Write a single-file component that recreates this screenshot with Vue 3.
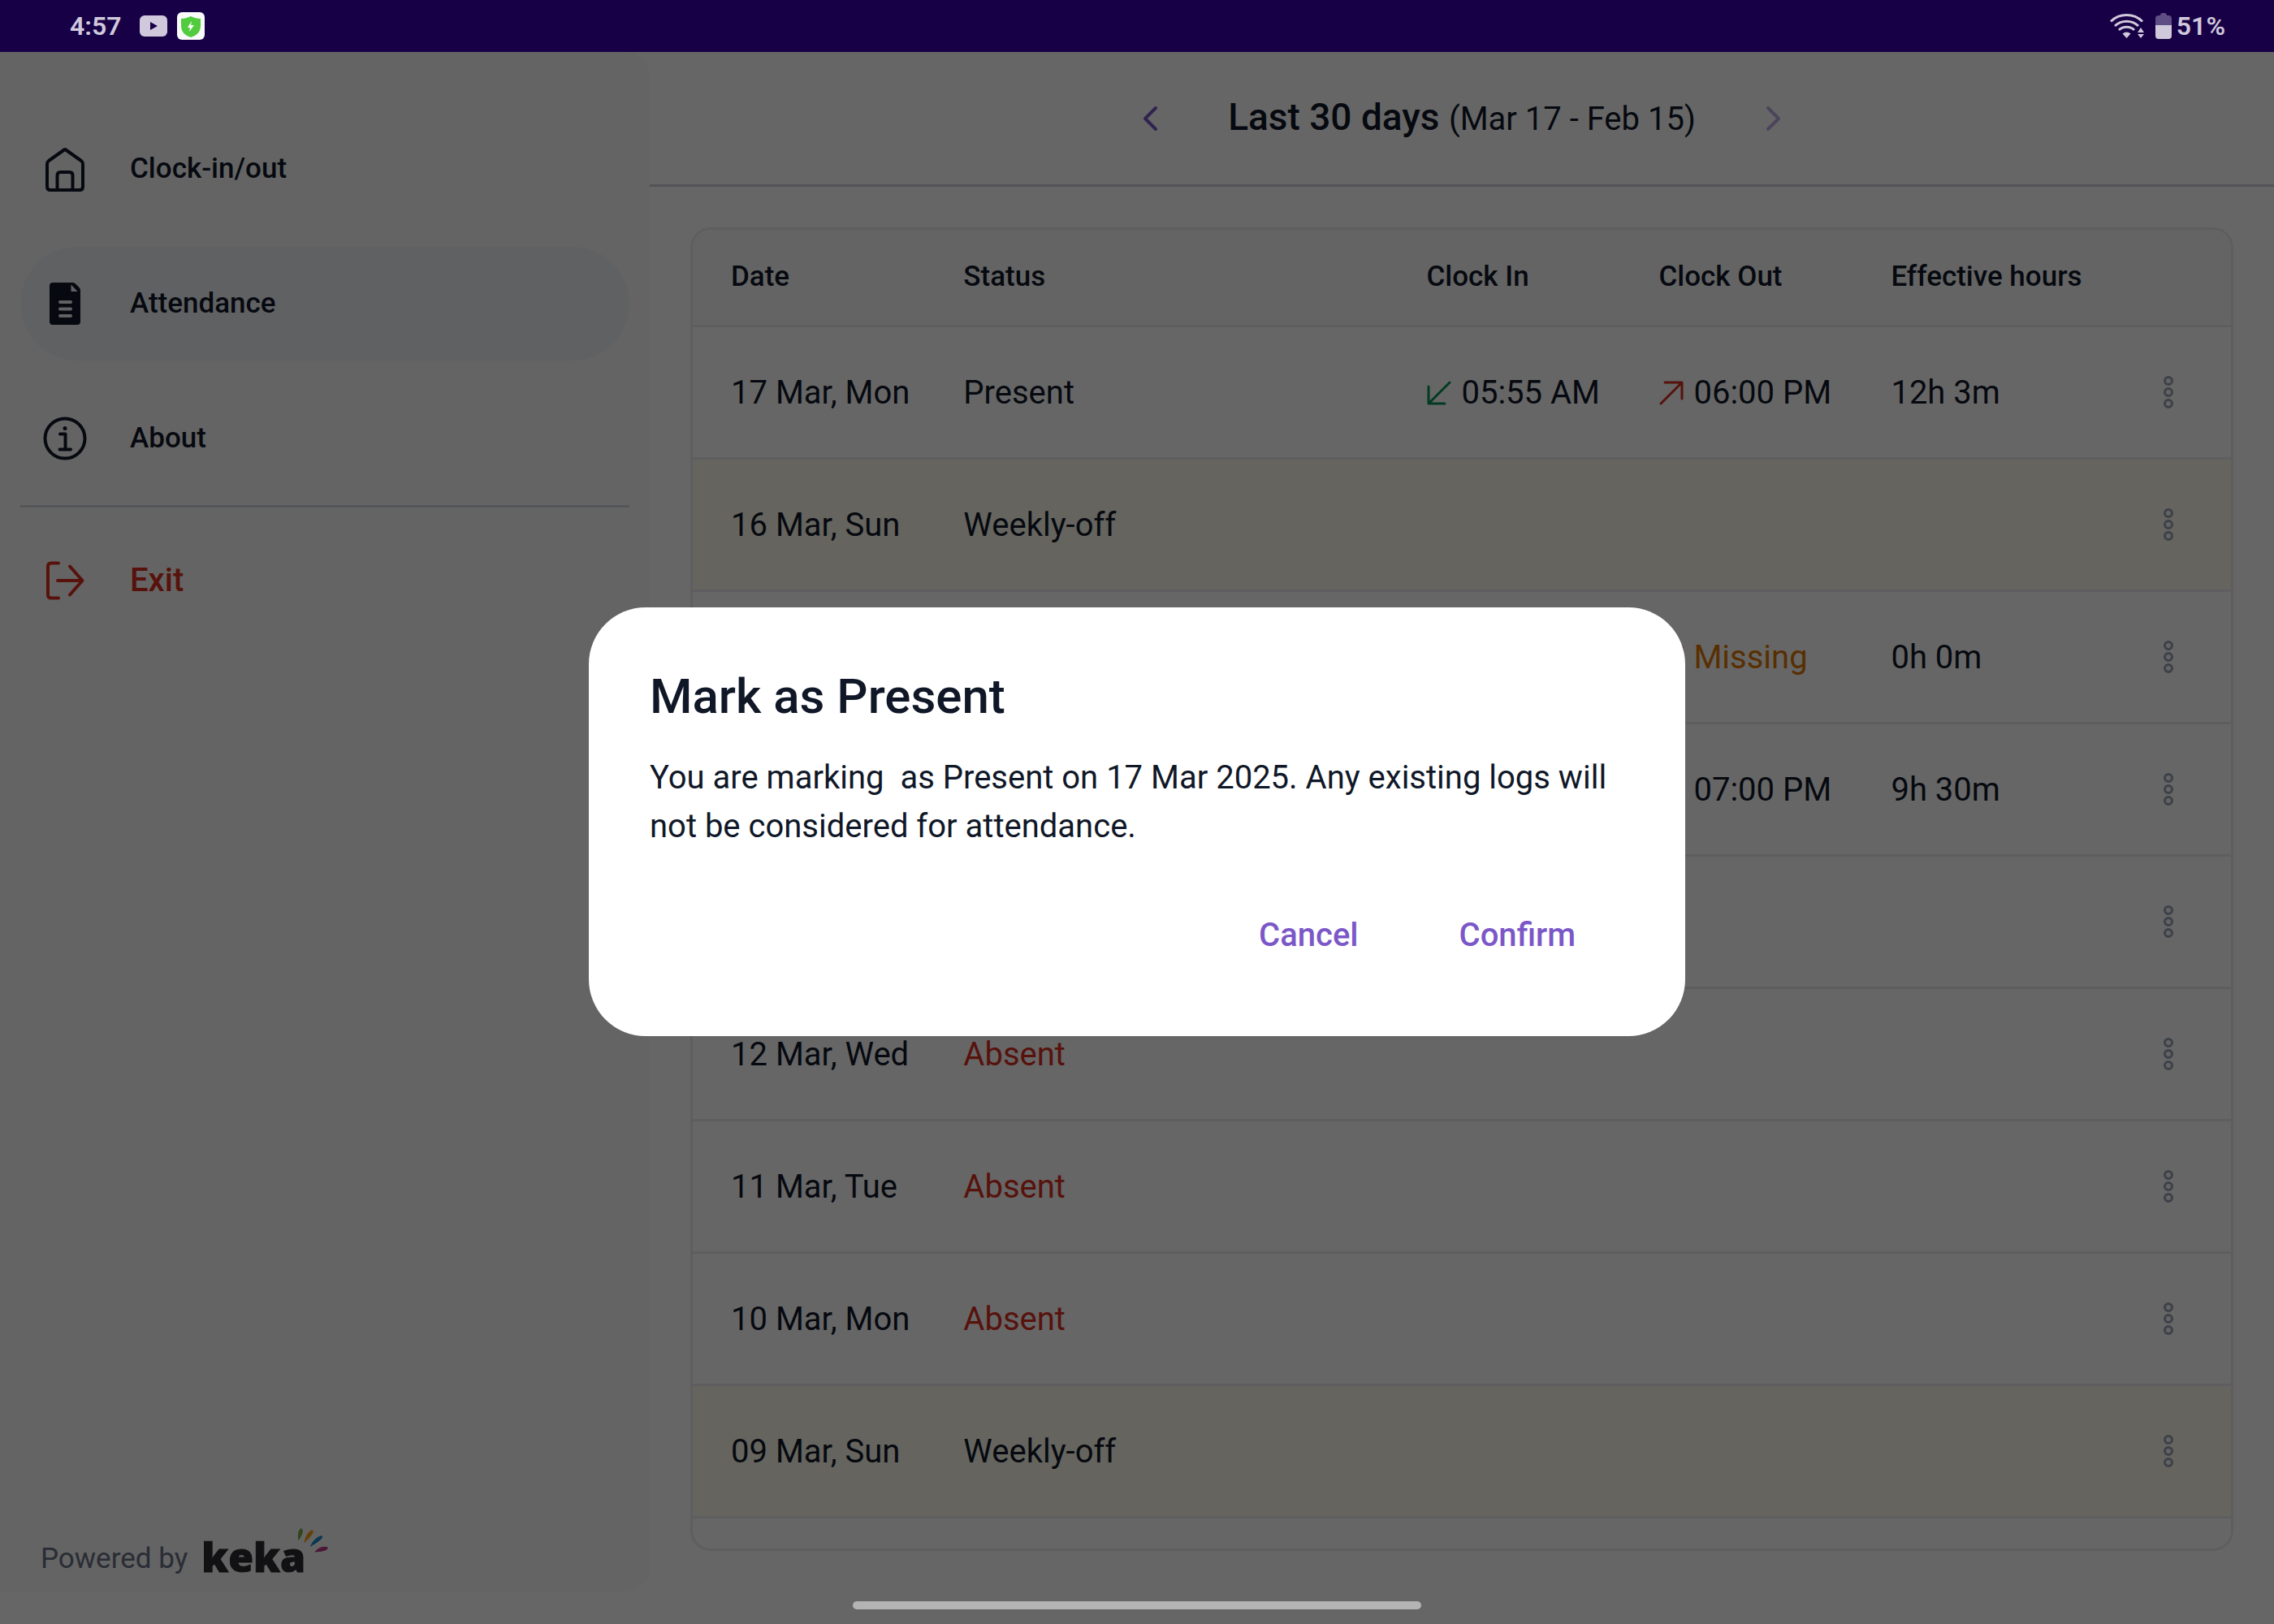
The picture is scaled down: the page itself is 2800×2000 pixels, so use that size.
<script setup>
import { ref } from 'vue'

const rows = [
  { date: '17 Mar, Mon', status: 'Present', clockIn: '05:55 AM', clockOut: '06:00 PM', hours: '12h 3m' },
  { date: '16 Mar, Sun', status: 'Weekly-off', off: true },
  { clockOut: 'Missing', missing: true, hours: '0h 0m' },
  { clockOut: '07:00 PM', hours: '9h 30m' },
  {},
  { date: '12 Mar, Wed', status: 'Absent', absent: true },
  { date: '11 Mar, Tue', status: 'Absent', absent: true },
  { date: '10 Mar, Mon', status: 'Absent', absent: true },
  { date: '09 Mar, Sun', status: 'Weekly-off', off: true },
]

const dialogOpen = ref(true)
const message =
  'You are marking  as Present on 17 Mar 2025. Any existing logs will not be considered for attendance.'
</script>

<template>
  <div class="app">
    <header class="statusbar">
      <div class="status-group left">
        <span class="time">4:57</span>
        <svg class="i-video" viewBox="0 0 34 26" aria-hidden="true">
          <rect width="34" height="26" rx="6" fill="#d0c9dc" />
          <path d="M13 8v10l9-5z" fill="#170046" />
        </svg>
        <svg class="i-shield" viewBox="0 0 34 34" aria-hidden="true">
          <rect width="34" height="34" rx="6" fill="#fafafa" />
          <path d="M17 5c4 2 8 3 12 3v9c0 7-5 12-12 14C10 29 5 24 5 17V8c4 0 8-1 12-3z" fill="#52cc3e" />
          <path d="M18 11l-5 8h3l-1 5 6-8h-4z" fill="#fff" />
        </svg>
      </div>
      <div class="status-group">
        <svg class="i-wifi" viewBox="0 0 42 32" fill="none" stroke="#d0c9dc" stroke-width="3" aria-hidden="true">
          <path d="M1 10.500a28 28 0 0 1 39 0" />
          <path d="M6 16a21 21 0 0 1 29 0" />
          <path d="M11 21a14 14 0 0 1 19 0" />
          <path d="M20.500 31l-5-5.500q5-4 10 0z" fill="#d0c9dc" stroke="none" />
          <path d="M34 24l4-6 4 6zM34 26h8l-4 5z" fill="#d0c9dc" stroke="none" />
        </svg>
        <svg class="i-battery" viewBox="0 0 20 32" aria-hidden="true">
          <path d="M0 15V7q0-4 4-4h2q0-3 3-3h2q3 0 3 3h2q4 0 4 4v8z" fill="#5f4e83" />
          <path d="M0 15h20v13q0 4-4 4H4q-4 0-4-4z" fill="#d0c9dc" />
        </svg>
        <span class="time">51%</span>
      </div>
    </header>

    <div class="shell">
      <aside class="sidebar">
        <nav class="nav">
          <a href="#clock" class="nav-item">
            <svg viewBox="0 0 60 60" class="i-nav" aria-hidden="true">
              <path d="M29 6.500q1-1 2 0L50 20q2 1.500 2 4v28q0 4-4 4H12q-4 0-4-4V24q0-2.500 2-4zM20.500 56V38q0-4 4-4h11q4 0 4 4v18" />
            </svg>
            Clock-in/out
          </a>
          <a href="#attendance" class="nav-item active" aria-current="page">
            <svg viewBox="0 0 60 60" class="i-nav" aria-hidden="true">
              <path d="M15 4h24.500q2 0 3.500 1.500L47.500 10Q49 11.500 49 13.500V52q0 4-4 4H15q-4 0-4-4V8q0-4 4-4z" fill="currentColor" stroke="none" />
              <path d="M37.500 6.500l8 8.500h-8z" fill="#f1f3f7" stroke="none" />
              <path d="M24 28h13M24 36.500h13M24 45h13" stroke="#f1f3f7" />
            </svg>
            Attendance
          </a>
          <a href="#about" class="nav-item">
            <svg viewBox="0 0 60 60" class="i-nav" aria-hidden="true">
              <circle cx="30" cy="30" r="24.500" />
              <path d="M24 24.500h6.500V43M23.500 43.500h13.500" />
              <circle cx="30" cy="17.500" r="2.500" fill="currentColor" stroke="none" />
            </svg>
            About
          </a>
        </nav>
        <a href="#exit" class="nav-item exit">
          <svg viewBox="0 0 60 60" class="i-nav" aria-hidden="true">
            <path d="M22 8.500H13q-4 0-4 4v35q0 4 4 4h9M21 30h30M36 12.500L51.500 30 36 47.500" />
          </svg>
          Exit
        </a>
        <footer class="powered">
          Powered by
          <span class="logo">
            <span class="logo-word">keka</span>
            <svg class="rays" viewBox="0 0 45 40" stroke-linejoin="round" stroke-width="1" aria-hidden="true">
              <path d="M5.500 16Q4.500 4 9 2.500Q13 5 6 16z" fill="#76b043" stroke="#76b043" />
              <path d="M13 19.500Q15 8 22 4.500Q27 6 13 19.500z" fill="#f7a11a" stroke="#f7a11a" />
              <path d="M20.500 24Q25 14 34 11.500Q38 14 20.500 24z" fill="#1b88c9" stroke="#1b88c9" />
              <path d="M26 31Q32 24 41 25.500Q43 30 26 31z" fill="#b93a86" stroke="#b93a86" />
            </svg>
          </span>
        </footer>
      </aside>

      <main class="main">
        <div class="period">
          <button type="button" class="arrow" aria-label="Previous period">
            <svg viewBox="0 0 60 60" class="i-nav"><path d="M37 17L24 30l13 13" /></svg>
          </button>
          <h1 class="period-title">Last 30 days <span>(Mar 17 - Feb 15)</span></h1>
          <button type="button" class="arrow next" aria-label="Next period">
            <svg viewBox="0 0 60 60" class="i-nav"><path d="M23 17l13 13-13 13" /></svg>
          </button>
        </div>

        <section class="card">
          <table>
            <colgroup>
              <col class="c-date" />
              <col class="c-status" />
              <col class="c-time" />
              <col class="c-time" />
              <col class="c-time" />
              <col />
            </colgroup>
            <thead>
              <tr>
                <th scope="col">Date</th>
                <th scope="col">Status</th>
                <th scope="col">Clock In</th>
                <th scope="col">Clock Out</th>
                <th scope="col">Effective hours</th>
                <th></th>
              </tr>
            </thead>
            <tbody>
              <tr v-for="(row, index) in rows" :key="index" :class="{ off: row.off }">
                <td>{{ row.date }}</td>
                <td :class="{ absent: row.absent }">{{ row.status }}</td>
                <td>
                  <span v-if="row.clockIn" class="punch">
                    <svg viewBox="0 0 32 32" class="i-in"><path d="M29 3L3 29M3 8v21h20" /></svg>
                    {{ row.clockIn }}
                  </span>
                </td>
                <td>
                  <span v-if="row.clockOut" class="punch" :class="{ missing: row.missing }">
                    <svg viewBox="0 0 32 32" class="i-out"><path d="M3 29L29 3M8 3h21v20" /></svg>
                    {{ row.clockOut }}
                  </span>
                </td>
                <td>{{ row.hours }}</td>
                <td class="actions">
                  <button type="button" class="more" aria-label="Row options">
                    <svg viewBox="0 0 60 60">
                      <circle cx="30" cy="16" r="4.500" />
                      <circle cx="30" cy="30" r="4.500" />
                      <circle cx="30" cy="44" r="4.500" />
                    </svg>
                  </button>
                </td>
              </tr>
            </tbody>
          </table>
        </section>
      </main>
    </div>

    <div v-if="dialogOpen" class="scrim">
      <div class="dialog" role="dialog" aria-modal="true" aria-labelledby="dialog-title">
        <h2 id="dialog-title">Mark as Present</h2>
        <p>{{ message }}</p>
        <div class="dialog-actions">
          <button type="button" @click="dialogOpen = false">Cancel</button>
          <button type="button" @click="dialogOpen = false">Confirm</button>
        </div>
      </div>
    </div>

    <div class="gesture"><span></span></div>
  </div>
</template>

<style>
body {
  background: #fff;
}
</style>

<style scoped>
.app {
  display: flex;
  flex-direction: column;
  min-height: 100vh;
  font-family: Roboto, 'Noto Sans', sans-serif;
  font-size: 40px;
  line-height: 60px;
  color: #101828;
  background: #fff;
}
.app *,
.app {
  box-sizing: border-box;
}
button {
  border: 0;
  padding: 0;
  background: none;
  font: inherit;
  color: inherit;
}
svg {
  display: block;
  flex: none;
}

.statusbar {
  display: flex;
  justify-content: space-between;
  align-items: center;
  height: 64px;
  padding: 0 60px 0 86px;
  background: #170046;
  color: #d0c9dc;
}
.status-group {
  display: flex;
  align-items: center;
}
.time {
  font-size: 32px;
  line-height: 40px;
  font-weight: 600;
}
.left {
  gap: 12px;
}
.left .time {
  margin-right: 10px;
}
.i-video {
  width: 34px;
  height: 26px;
}
.i-shield {
  width: 34px;
  height: 34px;
}
.i-wifi {
  width: 42px;
  height: 32px;
  margin-right: 14px;
}
.i-battery {
  width: 20px;
  height: 32px;
  margin-right: 6px;
}

.shell {
  flex: 1;
  display: flex;
}
.sidebar {
  flex: 0 0 800px;
  display: flex;
  flex-direction: column;
  padding: 74px 25px 10px;
  border-radius: 0 30px 30px 0;
  background: #fafafa;
}
.nav {
  display: flex;
  flex-direction: column;
  gap: 26px;
  padding-bottom: 12px;
  margin-bottom: 20px;
  border-bottom: 3px solid #d0d5dd;
}
.nav-item {
  display: flex;
  align-items: center;
  gap: 50px;
  height: 140px;
  padding: 0 25px;
  border-radius: 70px;
  font-size: 35px;
  font-weight: 500;
  color: #101828;
  text-decoration: none;
}
.nav-item.active {
  background: #f1f3f7;
}
.nav-item.exit {
  font-size: 40px;
  color: #d92d20;
}
.i-nav {
  width: 60px;
  height: 60px;
  fill: none;
  stroke: currentColor;
  stroke-width: 4;
  stroke-linecap: round;
  stroke-linejoin: round;
}
.powered {
  display: flex;
  align-items: flex-start;
  gap: 17px;
  margin-top: auto;
  padding: 0 25px;
  font-size: 35px;
  color: #667085;
}
.logo {
  display: flex;
  align-items: flex-start;
}
.logo-word {
  font-family: 'Open Sans', sans-serif;
  font-weight: 800;
  font-size: 50px;
  line-height: 54px;
  color: #2b2b30;
  -webkit-text-stroke: 1px #2b2b30;
}
.rays {
  width: 45px;
  height: 40px;
  margin: -10px 0 0 -14px;
}

.main {
  flex: 1;
  min-width: 0;
  display: flex;
  flex-direction: column;
}
.period {
  display: flex;
  justify-content: center;
  align-items: center;
  gap: 66px;
  height: 166px;
  border-bottom: 3px solid #d0d0dd;
}
.period-title {
  margin: 0;
  font-size: 46px;
  font-weight: 500;
}
.period-title span {
  font-size: 40px;
  font-weight: 400;
}
.arrow {
  color: #7b57c8;
}
.arrow.next {
  opacity: 0.5;
}

.card {
  flex: 1;
  margin: 50px;
  border: 3px solid #ebebef;
  border-radius: 25px;
  overflow: hidden;
}
table {
  width: 100%;
  table-layout: fixed;
  border-collapse: separate;
  border-spacing: 0;
}
.c-date {
  width: 17.600%;
}
.c-status {
  width: 30.100%;
}
.c-time {
  width: 15.100%;
}
th,
td {
  padding: 0;
  border-bottom: 3px solid #ebebef;
  text-align: left;
  white-space: nowrap;
}
th {
  height: 120px;
  padding-bottom: 2px;
  font-size: 35px;
  font-weight: 500;
  background: #fafafa;
}
td {
  height: 163px;
  padding-top: 2px;
}
td.actions {
  padding-top: 0;
}
th:first-child,
td:first-child {
  padding-left: 47px;
}
.off td {
  background: #fdfaec;
}
.absent {
  color: #d92d20;
}
.punch {
  display: flex;
  align-items: center;
  gap: 11px;
}
.missing {
  color: #dc7703;
}
.i-in,
.i-out {
  width: 32px;
  height: 32px;
  fill: none;
  stroke-width: 3;
  stroke-linecap: round;
  stroke-linejoin: round;
}
.i-in {
  stroke: #079455;
}
.i-out {
  stroke: #d92d20;
}
.more {
  display: block;
  margin-left: 26px;
}
.more svg {
  width: 60px;
  height: 60px;
  fill: #f9fafb;
  stroke: #98a2b3;
  stroke-width: 3;
}

.scrim {
  position: fixed;
  inset: 64px 0 0;
  display: flex;
  align-items: center;
  justify-content: center;
  padding-bottom: 40px;
  background: rgba(0, 0, 0, 0.6);
}
.dialog {
  width: 1350px;
  max-width: 90%;
  padding: 75px 75px 64px;
  border-radius: 70px;
  background: #fff;
}
.dialog h2 {
  margin: 0 0 35px;
  font-size: 60px;
  line-height: 70px;
  font-weight: 500;
}
.dialog p {
  margin: 0 0 44px;
  white-space: pre-wrap;
}
.dialog-actions {
  display: flex;
  justify-content: flex-end;
  gap: 4px;
}
.dialog-actions button {
  height: 120px;
  padding: 0 60px;
  font-weight: 500;
  color: #7b57c8;
}

.gesture {
  position: relative;
  z-index: 2;
  display: flex;
  justify-content: center;
  height: 40px;
  padding-top: 12px;
}
.gesture span {
  width: 25%;
  height: 10px;
  border-radius: 5px;
  background: #b4b4b4;
}
</style>
